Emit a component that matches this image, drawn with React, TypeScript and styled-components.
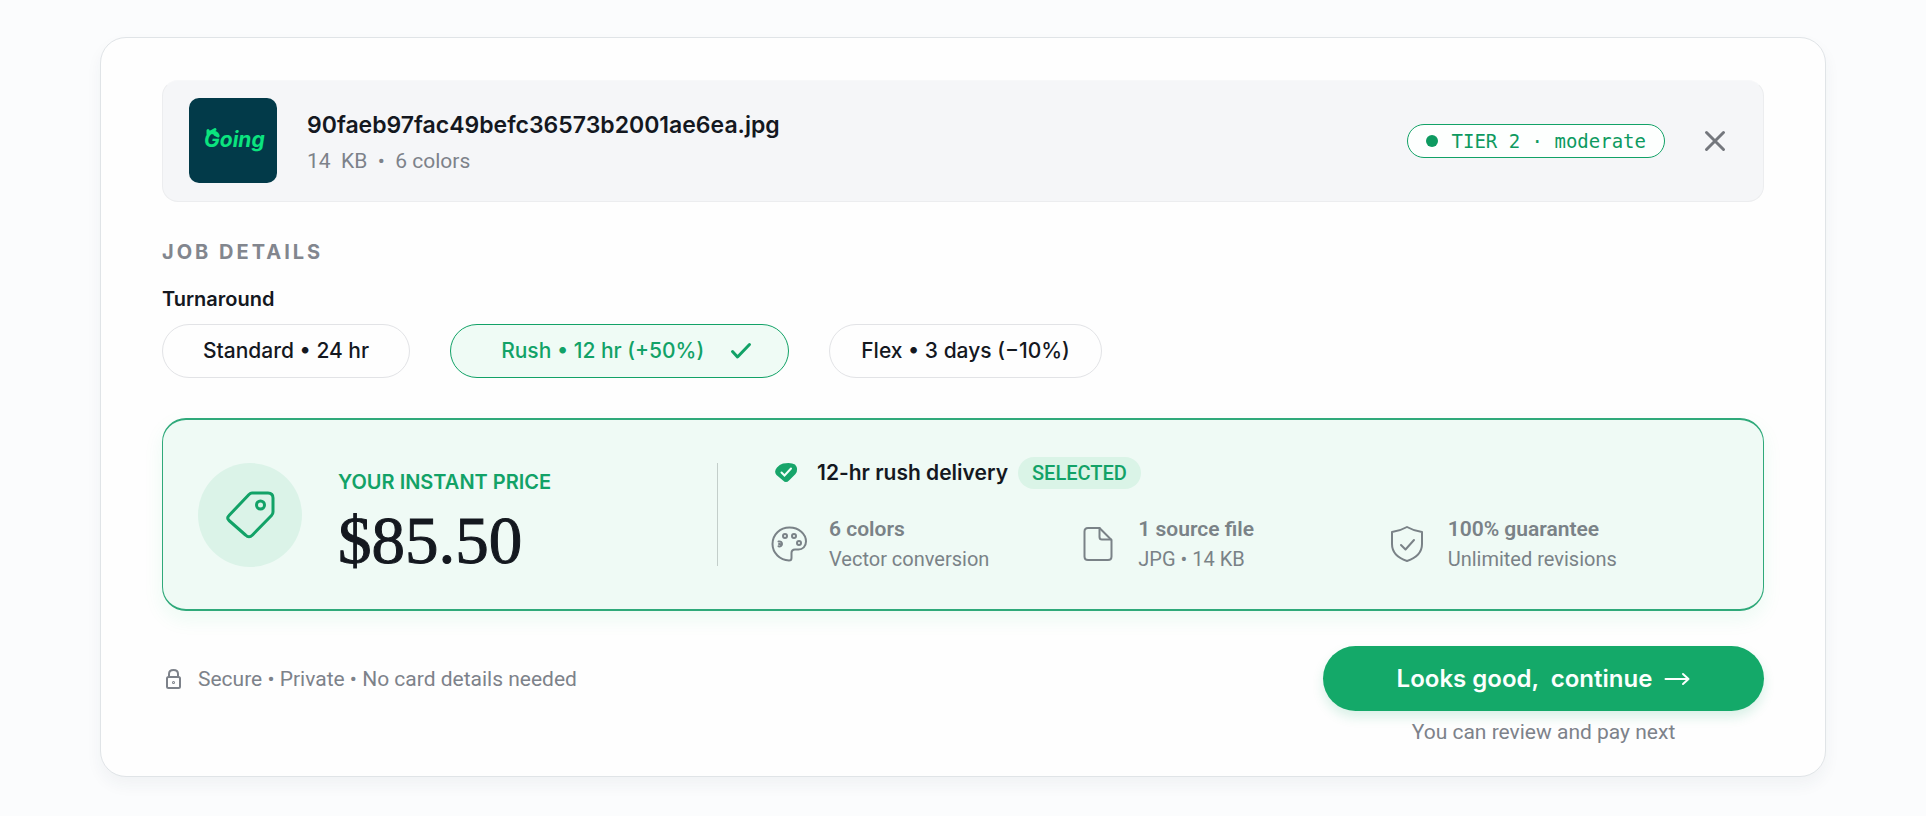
import React, { useState } from "react";
import styled, { createGlobalStyle } from "styled-components";

const green = "#12a267";
const ink = "#14181f";
const muted = "#7d828a";
const inter = `Inter, "Liberation Sans", sans-serif`;
const roboto = `Roboto, "Liberation Sans", sans-serif`;

const GlobalStyle = createGlobalStyle`
  *, *::before, *::after { box-sizing: border-box; }
  body {
    margin: 0;
    background: #fbfcfd;
    color: ${ink};
    font-family: ${inter};
    font-size: 20px;
    line-height: 28px;
  }
  button { font: inherit; border: 0; cursor: pointer; }
`;

const Page = styled.main`
  padding: 37px 100px 40px;
`;

const Card = styled.section`
  padding: 42px 61px 30px;
  background: #fefefe;
  border: 1px solid #e0e4e7;
  border-radius: 26px;
  box-shadow: 0 8px 16px rgba(30, 50, 70, 0.05);
`;

const FileBar = styled.header`
  display: flex;
  align-items: center;
  min-height: 122px;
  padding: 0 28px 1px 26px;
  background: #f5f6f8;
  border: 1px solid #ecedef;
  border-top-color: #f7f8f9;
  border-radius: 16px;
`;

const Thumb = styled.svg`
  width: 88px;
  height: 85px;
  border-radius: 10px;
  background: #023a49;
  flex: none;
`;

const FileText = styled.div`
  flex: 1;
  margin-left: 30px;
  padding-top: 4px;
`;

const FileName = styled.h1`
  margin: 0;
  font-size: 23px;
  line-height: 36px;
  font-weight: 600;
`;

const FileMeta = styled.p`
  margin: 0;
  font-family: ${roboto};
  font-size: 21px;
  line-height: 36px;
  color: ${muted};
  white-space: pre;
`;

const Tier = styled.span`
  display: flex;
  align-items: center;
  gap: 14px;
  height: 34px;
  padding: 0 18px;
  border: 1px solid #12a267;
  border-radius: 17px;
  background: #fdfffe;
  color: #0d9a60;
  font-family: "DejaVu Sans Mono", "Liberation Mono", monospace;
  font-size: 19px;
`;

const Dot = styled.span`
  width: 12px;
  height: 12px;
  border-radius: 50%;
  background: #0d9a60;
`;

const CloseButton = styled.button`
  display: grid;
  place-items: center;
  width: 40px;
  height: 40px;
  margin-left: 30px;
  padding: 0;
  background: none;
  color: #74777d;
`;

const SectionTitle = styled.h2`
  margin: 36px 0 19px;
  font-size: 20px;
  line-height: 28px;
  font-weight: 700;
  letter-spacing: 3px;
  color: #82868e;
`;

const Options = styled.fieldset`
  margin: 0;
  padding: 0;
  border: 0;
`;

const Legend = styled.legend`
  padding: 0;
  margin-bottom: 11px;
  font-weight: 600;
`;

const OptionRow = styled.div`
  display: flex;
  flex-wrap: wrap;
  gap: 40px;
`;

const Option = styled.label<{ $active: boolean; $pad: number }>`
  display: flex;
  align-items: center;
  gap: 26px;
  height: 54px;
  padding: 0 ${(p) => (p.$active ? 36 : p.$pad)}px 0 ${(p) => p.$pad}px;
  border: 1px solid ${(p) => (p.$active ? green : "#e2e3e6")};
  border-radius: 27px;
  background: ${(p) => (p.$active ? "#effbf5" : "#fefefe")};
  color: ${(p) => (p.$active ? green : ink)};
  font-size: 21px;
  font-weight: 500;
  cursor: pointer;
`;

const HiddenRadio = styled.input`
  position: absolute;
  opacity: 0;
  pointer-events: none;
`;

const PricePanel = styled.section`
  display: grid;
  grid-template-columns: 519px 1fr;
  align-items: center;
  min-height: 193px;
  margin-top: 40px;
  padding: 0 64px 0 35px;
  border: solid #2fa97a;
  border-width: 2px 1px;
  border-radius: 24px;
  background: #effaf5;
  box-shadow: 0 8px 20px rgba(30, 200, 120, 0.08);
`;

const PriceSide = styled.div`
  display: flex;
  align-items: center;
  gap: 36px;
`;

const PriceText = styled.div`
  padding-top: 14px;
`;

const TagCircle = styled.span`
  display: grid;
  place-items: center;
  width: 104px;
  height: 104px;
  border-radius: 50%;
  background: #dbf3e8;
`;

const PriceLabel = styled.p`
  margin: 0;
  font-weight: 600;
  color: ${green};
`;

const Price = styled.p`
  margin: 8px 0 0;
  font-family: "Liberation Serif", serif;
  font-size: 67px;
  line-height: 72px;
  -webkit-text-stroke: 1px ${ink};
`;

const Summary = styled.div`
  position: relative;
  padding: 2px 0 0 54px;
  &::before {
    content: "";
    position: absolute;
    left: 0;
    top: 8px;
    bottom: 8px;
    width: 1px;
    background: #c3ceca;
  }
`;

const Delivery = styled.p`
  display: flex;
  align-items: center;
  margin: 0 0 25px;
  font-size: 21px;
  font-weight: 600;
`;

const DeliveryIcon = styled.svg`
  width: 30px;
  height: 30px;
  margin-right: 16px;
`;

const Selected = styled.span`
  margin-left: 10px;
  padding: 0 14px;
  border-radius: 16px;
  background: #daf4e7;
  color: ${green};
  font-family: ${roboto};
  font-size: 20px;
  line-height: 32px;
  font-weight: 500;
`;

const Features = styled.ul`
  display: grid;
  grid-template-columns: repeat(3, 1fr);
  margin: 0;
  padding: 0;
  list-style: none;
`;

const Feature = styled.li`
  display: flex;
  align-items: center;
  gap: 22px;
  color: #7a8287;
  font-family: ${roboto};
  line-height: 30px;
`;

const FeatureIcon = styled.svg`
  width: 36px;
  height: 36px;
  flex: none;
`;

const FeatureName = styled.strong`
  display: block;
  font-size: 21px;
  font-weight: 600;
`;

const Footer = styled.footer`
  display: flex;
  justify-content: space-between;
  margin-top: 35px;
`;

const Secure = styled.p`
  display: flex;
  align-items: center;
  gap: 14px;
  height: 65px;
  margin: 0;
  color: ${muted};
  font-family: ${roboto};
  font-size: 21px;
`;

const Action = styled.div`
  width: 441px;
  text-align: center;
`;

const ContinueButton = styled.button`
  display: flex;
  align-items: center;
  justify-content: center;
  gap: 12px;
  width: 100%;
  height: 65px;
  border-radius: 33px;
  background: #14a969;
  color: #fbfffd;
  font-size: 24px;
  font-weight: 600;
  white-space: pre;
  box-shadow: 0 6px 12px rgba(20, 169, 105, 0.16);
`;

const Note = styled.p`
  margin: 7px 0 0;
  color: ${muted};
  font-family: ${roboto};
  font-size: 21px;
`;

const options = [
  { id: "standard", label: "Standard • 24 hr", pad: 40 },
  { id: "rush", label: "Rush • 12 hr (+50%)", pad: 50 },
  { id: "flex", label: "Flex • 3 days (−10%)", pad: 31 },
];

const stroke = {
  fill: "none",
  stroke: "currentColor",
  strokeLinecap: "round" as const,
  strokeLinejoin: "round" as const,
};

const PaletteIcon = () => (
  <FeatureIcon viewBox="0 0 36 36" {...stroke} strokeWidth="2">
    <path d="M18 34.500C9 34 1.500 27 1.500 18C1.500 8.500 9 1.500 18.500 1.500C28 1.500 35 8 35 15.500C35 20.500 31.500 23.500 27.500 23.500H24Q20.500 23.500 20.500 27V32C20.500 33.500 19.500 34.500 18 34.500Z" />
    <circle cx="14" cy="10" r="2" />
    <circle cx="23" cy="10" r="2" />
    <circle cx="28" cy="17" r="2" />
    <path d="M7.500 15.500C10 15 11 16.500 11 18C11 19.500 9.500 20.800 7.500 20.300M8 18H9" />
  </FeatureIcon>
);

const FileIcon = () => (
  <FeatureIcon viewBox="0 0 36 36" {...stroke} strokeWidth="2">
    <path d="M8 2H19.500L31.500 14V30.500Q31.500 34 28 34H8Q4.500 34 4.500 30.500V5.500Q4.500 2 8 2Z" />
    <path d="M19.500 2V11Q19.500 13.500 22 13.500H31" />
  </FeatureIcon>
);

const ShieldIcon = () => (
  <FeatureIcon viewBox="0 0 36 36" {...stroke} strokeWidth="2">
    <path d="M17 1Q24 5 32 6V18C32 26 26 32 17 35C8 32 2 26 2 18V6Q10 5 17 1Z" />
    <path d="M11 19L15.500 23.500L24 14" />
  </FeatureIcon>
);

export default function App() {
  const [choice, setChoice] = useState("rush");
  return (
    <>
      <GlobalStyle />
      <Page>
        <Card>
          <FileBar>
            <Thumb viewBox="0 0 88 85" role="img" aria-label="Going">
              <text x="15" y="49" fill="#0be47f" fontFamily="Inter, sans-serif" fontSize="21" fontWeight="700" fontStyle="italic">
                Going
              </text>
              <path d="M19 36V32.500M19 33.500L27 35.500M22.500 33.500L26 31.500M26 36.500L29 38" fill="none" stroke="#0be47f" strokeWidth="3" strokeLinecap="round" />
            </Thumb>
            <FileText>
              <FileName>90faeb97fac49befc36573b2001ae6ea.jpg</FileName>
              <FileMeta>{"14  KB  •  6 colors"}</FileMeta>
            </FileText>
            <Tier>
              <Dot />
              TIER 2 · moderate
            </Tier>
            <CloseButton type="button" aria-label="Remove file">
              <svg width="22" height="22" viewBox="0 0 22 22" {...stroke} strokeWidth="3">
                <path d="M2.500 2.500L19.500 19.500M19.500 2.500L2.500 19.500" />
              </svg>
            </CloseButton>
          </FileBar>

          <SectionTitle>JOB DETAILS</SectionTitle>
          <Options>
            <Legend>Turnaround</Legend>
            <OptionRow>
              {options.map((o) => (
                <Option key={o.id} $active={choice === o.id} $pad={o.pad}>
                  <HiddenRadio
                    type="radio"
                    name="turnaround"
                    checked={choice === o.id}
                    onChange={() => setChoice(o.id)}
                  />
                  {o.label}
                  {choice === o.id && (
                    <svg width="22" height="18" viewBox="0 0 22 18" {...stroke} strokeWidth="3">
                      <path d="M2.500 9.500L7.500 15L19.500 2.500" />
                    </svg>
                  )}
                </Option>
              ))}
            </OptionRow>
          </Options>

          <PricePanel>
            <PriceSide>
              <TagCircle>
                <svg width="50" height="50" viewBox="0 0 50 50" {...stroke} stroke={green} strokeWidth="3">
                  <path d="M27 3H43Q48 3 48 8V22Q48 24 46.500 25.500L27.500 45Q24 48.500 20.500 45L4 30.500Q1.500 28 4 25.500L24 4.500Q25.500 3 27 3Z" />
                  <circle cx="35.500" cy="15" r="4" />
                </svg>
              </TagCircle>
              <PriceText>
                <PriceLabel>YOUR INSTANT PRICE</PriceLabel>
                <Price>$85.50</Price>
              </PriceText>
            </PriceSide>
            <Summary>
              <Delivery>
                <DeliveryIcon viewBox="0 0 30 30">
                  <path d="M12 5.500Q20 4 24 6.500Q28 11 24.500 16L18 22.500Q15 25.500 12 22.500L5.500 17Q2.500 13.500 6 9.500Q8.500 6.500 12 5.500Z" fill="#17a56a" />
                  <path d="M10.500 14.500L13.500 17.500L20 10.500" fill="none" stroke="#f2fff9" strokeWidth="2" strokeLinecap="round" />
                </DeliveryIcon>
                12-hr rush delivery
                <Selected>SELECTED</Selected>
              </Delivery>
              <Features>
                <Feature>
                  <PaletteIcon />
                  <span>
                    <FeatureName>6 colors</FeatureName>
                    Vector conversion
                  </span>
                </Feature>
                <Feature>
                  <FileIcon />
                  <span>
                    <FeatureName>1 source file</FeatureName>
                    JPG • 14 KB
                  </span>
                </Feature>
                <Feature>
                  <ShieldIcon />
                  <span>
                    <FeatureName>100% guarantee</FeatureName>
                    Unlimited revisions
                  </span>
                </Feature>
              </Features>
            </Summary>
          </PricePanel>

          <Footer>
            <Secure>
              <svg width="22" height="22" viewBox="0 0 22 22" {...stroke} strokeWidth="2">
                <rect x="5" y="9" width="13" height="11" rx="1.500" />
                <path d="M7 9V6Q7 2 11.500 2Q16 2 16 6V9" />
                <circle cx="11.500" cy="14.500" r="0.500" />
              </svg>
              Secure • Private • No card details needed
            </Secure>
            <Action>
              <ContinueButton type="button">
                {"Looks good,  continue"}
                <svg width="26" height="14" viewBox="0 0 26 14" {...stroke} strokeWidth="2">
                  <path d="M1.500 7H24.500M19 2L24.500 7L19 12" />
                </svg>
              </ContinueButton>
              <Note>You can review and pay next</Note>
            </Action>
          </Footer>
        </Card>
      </Page>
    </>
  );
}
